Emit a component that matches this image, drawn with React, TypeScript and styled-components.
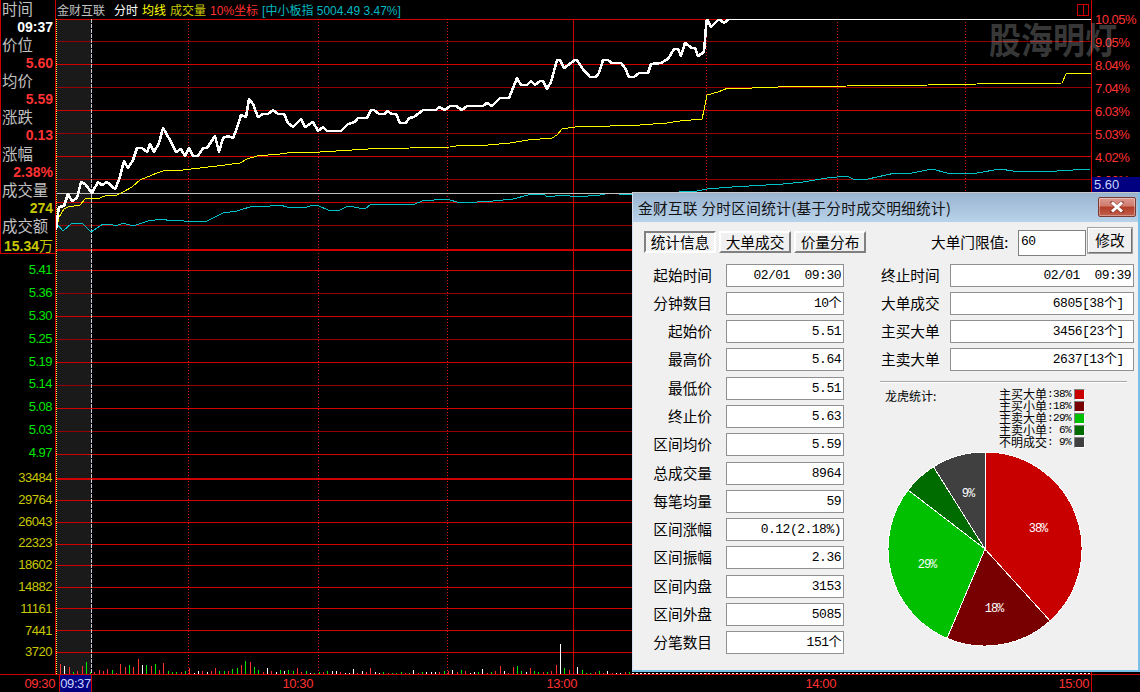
import { FC } from 'react';
import styled, { createGlobalStyle } from 'styled-components';

const SANS = '"Liberation Sans", "Noto Sans CJK SC", sans-serif';
const CJK = '"Noto Sans CJK SC", "Liberation Sans", sans-serif';
const MONO = '"Liberation Mono", "Noto Sans CJK SC", monospace';

const RED = '#d00000';
const DIM_RED = '#960000';
const TEXT_RED = '#ff3232';
const OLIVE = '#c8c800';

const GlobalStyle = createGlobalStyle`
  html, body {
    margin: 0;
    background: #000;
    overflow: hidden;
  }
`;

const Screen = styled.div`
  position: relative;
  width: 1140px;
  height: 692px;
  overflow: hidden;
  background: #000;
  font-family: ${SANS};
`;

const Top = styled.div`
  display: flex;
  height: 674px;
`;

const LeftColumn = styled.div`
  width: 56px;
  flex: none;
  box-sizing: border-box;
  border-right: 1px solid ${RED};
`;

const InfoPanel = styled.div`
  box-sizing: border-box;
  height: 254px;
  border-left: 1px solid ${RED};
  border-bottom: 1px solid ${RED};
  display: flex;
  flex-direction: column;
`;

const InfoRow = styled.div<{ $value?: string }>`
  height: 18.07px;
  flex: none;
  white-space: nowrap;
  ${(p) =>
    p.$value
      ? `text-align: right; padding-right: 2px; font: bold 14px/18px ${SANS}; color: ${p.$value};`
      : `padding-left: 1px; font: 15.4px/17px ${CJK}; color: #c0c0c0;`}
`;

const ThinUnit = styled.span`
  font: 14px ${CJK};
`;

const PriceTicks = styled.div`
  padding-top: 5px;
`;

const VolumeTicks = styled.div`
  padding-top: 2px;
`;

const AxisTick = styled.div<{ $color: string; $h: number }>`
  height: ${(p) => p.$h}px;
  line-height: ${(p) => p.$h}px;
  text-align: right;
  padding-right: 3px;
  font-size: 13px;
  letter-spacing: -0.5px;
  color: ${(p) => p.$color};
`;

const Main = styled.div`
  width: 1035px;
  flex: none;
`;

const Header = styled.div`
  height: 19px;
  display: flex;
  align-items: center;
  padding-left: 1px;
  font-size: 12px;
  white-space: nowrap;
`;

const Legend = styled.span<{ $color: string; $gap?: number }>`
  color: ${(p) => p.$color};
  margin-right: ${(p) => p.$gap ?? 4}px;
`;

const SplitToggle = styled.span`
  position: relative;
  margin-left: auto;
  margin-right: 2px;
  width: 10px;
  height: 10px;
  border: 1px solid ${RED};
  &::after {
    content: '';
    position: absolute;
    left: 5px;
    top: 0;
    bottom: 0;
    width: 1px;
    background: ${RED};
  }
`;

const Plot = styled.svg`
  display: block;
`;

const RightColumn = styled.div`
  flex: 1;
  border-left: 1px solid ${RED};
`;

const ScaleClip = styled.div`
  height: 177px;
  overflow: hidden;
  padding-top: 7.5px;
  box-sizing: border-box;
`;

const ScaleTick = styled.div`
  height: 23px;
  line-height: 23px;
  padding-left: 3px;
  font-size: 13px;
  letter-spacing: -0.5px;
  color: ${TEXT_RED};
`;

const LastPrice = styled.div`
  height: 15px;
  line-height: 15px;
  padding-left: 2px;
  background: #000080;
  color: #c8d4ff;
  font-size: 13px;
`;

const Footer = styled.div`
  display: flex;
  height: 18px;
  box-sizing: border-box;
  border-top: 1px solid ${RED};
  font-size: 13px;
  letter-spacing: -0.4px;
  line-height: 18px;
  color: ${TEXT_RED};
`;

const TimeTick = styled.div<{ $w: number }>`
  width: ${(p) => p.$w}px;
  flex: none;
  text-align: right;
`;

const CursorTime = styled.div`
  width: 33px;
  flex: none;
  margin-left: 4px;
  box-sizing: border-box;
  border-left: 1px solid ${RED};
  border-right: 1px solid ${RED};
  background: #000080;
  color: #c8d4ff;
  text-align: center;
`;

const EndTick = styled(TimeTick)`
  box-sizing: border-box;
  padding-right: 2px;
  border-right: 1px solid ${RED};
`;

const Watermark = styled.div`
  position: absolute;
  left: 989px;
  top: 11px;
  font: bold 32px/46px ${CJK};
  color: rgba(255, 255, 255, 0.23);
  transform: scaleY(1.15);
  transform-origin: top left;
  white-space: nowrap;
`;

/* dialog */

const Dialog = styled.div`
  position: absolute;
  left: 632px;
  top: 192px;
  width: 508px;
  height: 480px;
  box-sizing: border-box;
  border-top: 1px solid #c8c8c8;
  border-left: 1px solid #d4e2f0;
  border-right: 2px solid #78c0e8;
  border-bottom: 2px solid #78c0e8;
  background: #f0f0f0;
  color: #000;
  font-family: ${CJK};
`;

const TitleBar = styled.div`
  height: 29px;
  display: flex;
  align-items: center;
  justify-content: space-between;
  padding: 0 2px 0 5px;
  background: linear-gradient(#9ab4d0, #b8d2ea);
  font-size: 14.67px;
  line-height: 31px;
  letter-spacing: 0.3px;
  white-space: nowrap;
  color: #111;
`;

const CloseButton = styled.div`
  width: 38px;
  height: 20px;
  box-sizing: border-box;
  margin-bottom: 1px;
  display: flex;
  align-items: center;
  justify-content: center;
  border: 1px solid #7c3a34;
  border-radius: 2px;
  box-shadow: inset 0 0 0 1px rgba(255, 255, 255, 0.35);
  background: linear-gradient(#dc9a90 0%, #cf7a6c 45%, #b23c28 50%, #c0604c 100%);
`;

const Toolbar = styled.div`
  display: flex;
  align-items: flex-start;
  height: 28px;
  margin: 6px 0 7.5px;
  padding-left: 11px;
`;

const Tabs = styled.div`
  display: flex;
  gap: 3px;
  margin-top: 3px;
`;

const Tab = styled.div<{ $active?: boolean }>`
  width: 72px;
  height: 22px;
  box-sizing: border-box;
  text-align: center;
  font-size: 14.67px;
  line-height: 18px;
  border: 2px solid;
  border-color: ${(p) =>
    p.$active ? '#808080 #fff #fff #808080' : '#fff #808080 #808080 #fff'};
  background: ${(p) =>
    p.$active ? 'repeating-conic-gradient(#fff 0 25%, #e8e8e8 0 50%) 0 0 / 2px 2px' : '#f0f0f0'};
`;

const ThresholdLabel = styled.div`
  margin-left: 65px;
  width: 89px;
  margin-top: 2px;
  font-size: 14.67px;
  line-height: 23px;
  white-space: nowrap;
`;

const ThresholdInput = styled.div`
  width: 68px;
  height: 26px;
  margin-top: 2px;
  margin-left: -2px;
  box-sizing: border-box;
  border: 1px solid #808080;
  background: #fff;
  padding: 2px 2px;
  font: 13px/18px ${MONO};
  letter-spacing: -0.5px;
`;

const ApplyButton = styled.div`
  width: 44px;
  height: 25px;
  margin-left: 2px;
  box-sizing: border-box;
  border: 1px solid;
  border-color: #fff #707070 #707070 #fff;
  box-shadow: 0 0 0 1px #a0a0a0;
  text-align: center;
  font-size: 14.67px;
  line-height: 22px;
`;

const Columns = styled.div`
  display: flex;
`;

const FieldList = styled.div`
  display: flex;
  flex-direction: column;
  gap: 5.3px;
`;

const LeftPane = styled(FieldList)`
  width: 211px;
  flex: none;
`;

const RightPane = styled.div`
  margin-left: 37px;
  width: 253px;
`;

const FieldRow = styled.div<{ $gap: number }>`
  display: flex;
  height: 23px;
  gap: ${(p) => p.$gap}px;
  align-items: center;
`;

const FieldLabel = styled.div<{ $w: number; $right?: boolean }>`
  width: ${(p) => p.$w}px;
  height: 23px;
  flex: none;
  font-size: 14.67px;
  line-height: 21px;
  white-space: nowrap;
  text-align: ${(p) => (p.$right ? 'right' : 'left')};
`;

const FieldValue = styled.div<{ $w: number }>`
  width: ${(p) => p.$w}px;
  height: 23px;
  flex: none;
  box-sizing: border-box;
  border: 1px solid #909090;
  background: #fff;
  text-align: right;
  padding-right: 2px;
  font: 13px/21px ${MONO};
  letter-spacing: -0.5px;
  white-space: pre;
`;

const Divider = styled.div`
  width: 247px;
  height: 1px;
  margin: 9.6px 0 0 -1px;
  background: #a8a8a8;
  border-bottom: 1px solid #fff;
`;

const StatHeader = styled.div`
  display: flex;
  justify-content: space-between;
  width: 204px;
  margin-top: 5.5px;
`;

const StatTitle = styled.div`
  margin: 2px 0 0 4px;
  font-size: 12px;
  line-height: 12px;
  white-space: nowrap;
`;

const SliceList = styled.div`
  display: flex;
  flex-direction: column;
  height: 60px;
`;

const SliceRow = styled.div`
  display: flex;
  align-items: center;
  height: 12px;
`;

const SliceName = styled.span`
  width: 48px;
  font-size: 12px;
  line-height: 12px;
  white-space: nowrap;
`;

const SlicePercent = styled.span`
  width: 24px;
  font: 11px/12px ${MONO};
  letter-spacing: -0.6px;
  white-space: pre;
`;

const Swatch = styled.span<{ $color: string }>`
  width: 11px;
  height: 11px;
  margin-left: 3px;
  box-sizing: border-box;
  border: 1px solid;
  border-color: #808080 #fff #fff #808080;
  background: ${(p) => p.$color};
`;

const PieChart = styled.svg`
  display: block;
`;

const PRICE_TICKS = ['5.41', '5.36', '5.30', '5.25', '5.19', '5.14', '5.08', '5.03', '4.97'];
const VOLUME_TICKS = ['33484', '29764', '26043', '22323', '18602', '14882', '11161', '7441', '3720'];
const SCALE_TICKS = ['10.05%', '9.05%', '8.04%', '7.04%', '6.03%', '5.03%', '4.02%', '3.02%'];

const INFO: [string, string, string][] = [
  ['时间', '09:37', '#fff'],
  ['价位', '5.60', TEXT_RED],
  ['均价', '5.59', TEXT_RED],
  ['涨跌', '0.13', TEXT_RED],
  ['涨幅', '2.38%', TEXT_RED],
  ['成交量', '274', OLIVE]
];

const LEFT_FIELDS = [
  ['起始时间', '02/01  09:30'],
  ['分钟数目', '10个'],
  ['起始价', '5.51'],
  ['最高价', '5.64'],
  ['最低价', '5.51'],
  ['终止价', '5.63'],
  ['区间均价', '5.59'],
  ['总成交量', '8964'],
  ['每笔均量', '59'],
  ['区间涨幅', '0.12(2.18%)'],
  ['区间振幅', '2.36'],
  ['区间内盘', '3153'],
  ['区间外盘', '5085'],
  ['分笔数目', '151个']
];

const RIGHT_FIELDS = [
  ['终止时间', '02/01  09:39'],
  ['大单成交', '6805[38个] '],
  ['主买大单', '3456[23个] '],
  ['主卖大单', '2637[13个] ']
];

const SLICES = [
  { name: '主买大单', pct: ':38%', color: '#c80000', end: 0.383, label: '38%', x: 1038, y: 533 },
  { name: '主买小单', pct: ':18%', color: '#780000', end: 0.564, label: '18%', x: 994, y: 613 },
  { name: '主卖大单', pct: ':29%', color: '#00c000', end: 0.854, label: '29%', x: 927, y: 569 },
  { name: '主卖小单', pct: ': 6%', color: '#006c00', end: 0.911, label: '', x: 0, y: 0 },
  { name: '不明成交', pct: ': 9%', color: '#404040', end: 1, label: '9%', x: 968, y: 498 }
];

const PRICE_LINE =
  '56,230 57,220 59,207 64,206 68,194 72,201 77,198 81,182 85,184 92,193 98,182 102,185 107,182 115,189 119,180 124,161 128,168 133,160 137,148 142,148 147,152 150,144 154,152 159,143 163,128 170,140 176,152 181,149 185,156 189,148 193,156 198,156 203,148 207,148 215,136 219,152 223,138 228,136 233,138 237,128 241,115 246,117 249,99 253,104 258,117 263,114 268,114 273,110 278,114 284,114 288,123 293,127 301,119 305,127 313,122 318,131 323,127 327,131 341,131 348,124 355,122 358,118 367,118 371,110 374,110 379,114 385,114 387,111 392,114 396,114 400,123 406,123 409,118 414,117 423,110 436,110 439,107 445,110 450,106 456,106 462,110 467,106 483,106 487,103 492,106 500,98 509,98 513,88 517,78 521,85 527,85 531,81 535,85 540,81 543,81 547,89 551,82 557,60 560,60 564,68 575,60 577,60 582,68 590,77 596,77 599,73 603,60 608,60 612,63 621,63 625,68 629,77 634,77 639,73 648,73 651,64 661,63 668,59 674,49 678,49 681,56 685,43 692,48 695,48 698,56 704,52 706,27 707,19 711,27 715,23 719,19 724,23 729,19 1091,19';

const AVERAGE_LINE =
  '57,227 59,217 64,209 68,207 80,205 85,199 100,198 107,195 117,195 123,192 132,187 140,180 157,173 166,170 183,170 200,168 217,166 240,163 247,159 257,156 280,154 295,152 320,152 352,150 368,149 410,148 450,147 463,145 488,145 510,143 528,140 552,138 557,135 562,129 575,127 588,126 610,126 640,125 667,123 680,121 702,119 704,110 707,95 718,92 728,88 752,88 778,87 847,86 928,85 977,84 1062,83 1066,74 1076,73 1091,73';

const INDEX_LINE_A =
  '57,224 63,231 71,224 82,223 91,232 103,224 110,224 116,226 123,223 133,226 148,221 163,219 170,221 180,220 188,222 207,221 223,213 237,211 253,206 260,207 280,205 287,207 307,207 313,205 319,206 328,210 340,210 348,206 365,209 371,204 390,204 415,204 422,201 447,199 460,203 477,202 493,201 513,199 528,195 543,194 548,197 563,195 577,197 600,195 605,194';

const INDEX_LINE_B =
  '619,194 632,195 679,192 697,191 707,189 732,187 783,184 803,182 827,178 847,176 853,179 868,179 895,173 912,173 932,169 947,173 977,173 1000,169 1013,171 1057,171 1090,169';

const VOLUME_BARS =
  'r10 w8 r7 g2 r3 r8 g12 g2 r2 r4 r3 r5 g4 r1 r10 r7 g9 r7 r15 w9 g9 r8 g10 r4 r11 g3 g2 g2 r2 g3 r6 w1 w3 r3 w2 r3 r6 g3 g3 r3 g5 g6 r9 g13 r12 g7 g4 r2 w6 r3 w2 g4 w3 g4 g3 r6 r2 g3 w1 g1 g2 r2 g3 w3 w3 r2 w1 w1 w5 r1 w3 r2 r6 w2 w1 g2 r1 g1 g1 g2 r1 g1 w4 r1 g2 w2 w2 w2 r2 g3 r3 w4 r2 g4 r3 w1 w2 g2 w5 r1 g2 r3 r8 w3 r1 r7 g8 g3 w2 r6 g3 g2 r2 g2 r3 r9 w30 g6 r4 r1 w7 g4 g1 g1 r2 g3 r1 w3 r1 w1 w1 r2 g2'.split(
    ' '
  );

const BAR_COLORS: Record<string, string> = { r: '#ff3232', g: '#00e600', w: '#ffffff' };

const H_LINES: [number, number, string][] = [
  [19, 1, RED], [41, 1, DIM_RED], [64, 1, RED], [87, 1, DIM_RED], [110, 1, RED],
  [133, 1, DIM_RED], [156, 1, RED], [179, 1, DIM_RED], [202, 1, RED], [225, 1, DIM_RED],
  [249, 2, RED], [270, 1, RED], [293, 1, DIM_RED], [316, 1, RED], [339, 1, DIM_RED],
  [362, 1, RED], [385, 1, DIM_RED], [408, 1, RED], [431, 1, DIM_RED], [454, 1, RED],
  [478, 2, RED], [500, 1, RED], [522, 1, RED], [544, 1, RED], [565, 1, RED],
  [587, 1, RED], [608, 1, RED], [630, 1, RED], [652, 1, RED]
];

const DOTTED_X = [188, 318, 447, 706, 837, 965];

const slicePath = (start: number, end: number) => {
  const cx = 985;
  const cy = 550;
  const r = 97;
  const point = (t: number) => {
    const a = t * Math.PI * 2;
    return `${(cx + r * Math.sin(a)).toFixed(1)} ${(cy - r * Math.cos(a)).toFixed(1)}`;
  };
  const large = end - start > 0.5 ? 1 : 0;
  return `M${cx} ${cy}L${point(start)}A${r} ${r} 0 ${large} 1 ${point(end)}Z`;
};

const Chart: FC = () => (
  <Plot width={1035} height={655} viewBox="56 19 1035 655" shapeRendering="crispEdges">
    <rect x={57} y={19} width={34} height={655} fill="#1a1a1a" />
    {H_LINES.map(([y, h, color]) => (
      <rect key={y} x={56} y={y} width={1035} height={h} fill={color} />
    ))}
    {DOTTED_X.map((x) => (
      <line key={x} x1={x + 0.5} x2={x + 0.5} y1={19} y2={674} stroke="#f01010" strokeDasharray="1 2" />
    ))}
    <rect x={573} y={19} width={1} height={655} fill={RED} />
    <line x1={56.5} x2={56.5} y1={19} y2={674} stroke="#ffff40" strokeDasharray="1 1" />
    <line x1={91.5} x2={91.5} y1={19} y2={674} stroke="#c8c8d8" strokeDasharray="4 1" />
    {VOLUME_BARS.map((bar, i) => {
      const h = Number(bar.slice(1));
      const x = Math.round(60 + (i * 569) / (VOLUME_BARS.length - 1));
      return <rect key={i} x={x} y={674 - h} width={1} height={h} fill={BAR_COLORS[bar[0]]} />;
    })}
    <line x1={632} x2={1091} y1={673.5} y2={673.5} stroke="#fff" strokeDasharray="2 2" />
    <polyline points={INDEX_LINE_A} fill="none" stroke="#00c0c8" strokeWidth={1} />
    <polyline points={INDEX_LINE_B} fill="none" stroke="#00c0c8" strokeWidth={1} />
    <rect x={56} y={193} width={1035} height={1} fill="#c0c0c0" />
    <polyline points={AVERAGE_LINE} fill="none" stroke="#ffff00" strokeWidth={1} />
    <polyline points={PRICE_LINE} fill="none" stroke="#fff" strokeWidth={2.6} strokeLinejoin="round" />
  </Plot>
);

const Pie: FC = () => (
  <PieChart width={210} height={200} viewBox="881 449 210 200">
    {SLICES.map((s, i) => (
      <path
        key={s.name}
        d={slicePath(i === 0 ? 0 : SLICES[i - 1].end, s.end)}
        fill={s.color}
        stroke="#fff"
        strokeWidth={1}
        shapeRendering="crispEdges"
      />
    ))}
    {SLICES.filter((s) => s.label).map((s) => (
      <text key={s.label} x={s.x} y={s.y} fill="#fff" fontSize={12} fontFamily={MONO} textAnchor="middle" letterSpacing={-1}>
        {s.label}
      </text>
    ))}
  </PieChart>
);

const StatsDialog: FC = () => (
  <Dialog>
    <TitleBar>
      金财互联 分时区间统计(基于分时成交明细统计)
      <CloseButton>
        <svg width="16" height="12" viewBox="0 0 16 12">
          <path d="M3 1.5L13 10.5M13 1.5L3 10.5" stroke="#6a2c24" strokeWidth="4" strokeLinecap="round" opacity="0.5" />
          <path d="M3 1.5L13 10.5M13 1.5L3 10.5" stroke="#fff" strokeWidth="3" />
        </svg>
      </CloseButton>
    </TitleBar>
    <Toolbar>
      <Tabs>
        <Tab $active>统计信息</Tab>
        <Tab>大单成交</Tab>
        <Tab>价量分布</Tab>
      </Tabs>
      <ThresholdLabel>大单门限值:</ThresholdLabel>
      <ThresholdInput>60</ThresholdInput>
      <ApplyButton>修改</ApplyButton>
    </Toolbar>
    <Columns>
      <LeftPane>
        {LEFT_FIELDS.map(([label, value]) => (
          <FieldRow key={label} $gap={14}>
            <FieldLabel $w={79} $right>
              {label}
            </FieldLabel>
            <FieldValue $w={118}>{value}</FieldValue>
          </FieldRow>
        ))}
      </LeftPane>
      <RightPane>
        <FieldList>
          {RIGHT_FIELDS.map(([label, value]) => (
            <FieldRow key={label} $gap={0}>
              <FieldLabel $w={69}>{label}</FieldLabel>
              <FieldValue $w={184}>{value}</FieldValue>
            </FieldRow>
          ))}
        </FieldList>
        <Divider />
        <StatHeader>
          <StatTitle>龙虎统计:</StatTitle>
          <SliceList>
            {SLICES.map((s) => (
              <SliceRow key={s.name}>
                <SliceName>{s.name}</SliceName>
                <SlicePercent>{s.pct}</SlicePercent>
                <Swatch $color={s.color} />
              </SliceRow>
            ))}
          </SliceList>
        </StatHeader>
        <Pie />
      </RightPane>
    </Columns>
  </Dialog>
);

const App: FC = () => (
  <Screen>
    <GlobalStyle />
    <Top>
      <LeftColumn>
        <InfoPanel>
          {INFO.map(([label, value, color]) => (
            <div key={label}>
              <InfoRow>{label}</InfoRow>
              <InfoRow $value={color}>{value}</InfoRow>
            </div>
          ))}
          <InfoRow>成交额</InfoRow>
          <InfoRow $value={OLIVE}>
            15.34<ThinUnit>万</ThinUnit>
          </InfoRow>
        </InfoPanel>
        <PriceTicks>
          {PRICE_TICKS.map((t) => (
            <AxisTick key={t} $color="#00e600" $h={22.9}>
              {t}
            </AxisTick>
          ))}
        </PriceTicks>
        <VolumeTicks>
          {VOLUME_TICKS.map((t) => (
            <AxisTick key={t} $color={OLIVE} $h={21.8}>
              {t}
            </AxisTick>
          ))}
        </VolumeTicks>
      </LeftColumn>
      <Main>
        <Header>
          <Legend $color="#c0c0c0" $gap={9}>金财互联</Legend>
          <Legend $color="#fff">分时</Legend>
          <Legend $color="#ffff00">均线</Legend>
          <Legend $color={OLIVE}>成交量</Legend>
          <Legend $color={TEXT_RED}>10%坐标</Legend>
          <Legend $color="#00b8c0">[中小板指 5004.49 3.47%]</Legend>
          <SplitToggle />
        </Header>
        <Chart />
      </Main>
      <RightColumn>
        <ScaleClip>
          {SCALE_TICKS.map((t) => (
            <ScaleTick key={t}>{t}</ScaleTick>
          ))}
        </ScaleClip>
        <LastPrice>5.60</LastPrice>
      </RightColumn>
    </Top>
    <Footer>
      <TimeTick $w={55}>09:30</TimeTick>
      <CursorTime>09:37</CursorTime>
      <TimeTick $w={221}>10:30</TimeTick>
      <TimeTick $w={264}>13:00</TimeTick>
      <TimeTick $w={259}>14:00</TimeTick>
      <EndTick $w={256}>15:00</EndTick>
    </Footer>
    <Watermark>股海明灯</Watermark>
    <StatsDialog />
  </Screen>
);

export default App;
